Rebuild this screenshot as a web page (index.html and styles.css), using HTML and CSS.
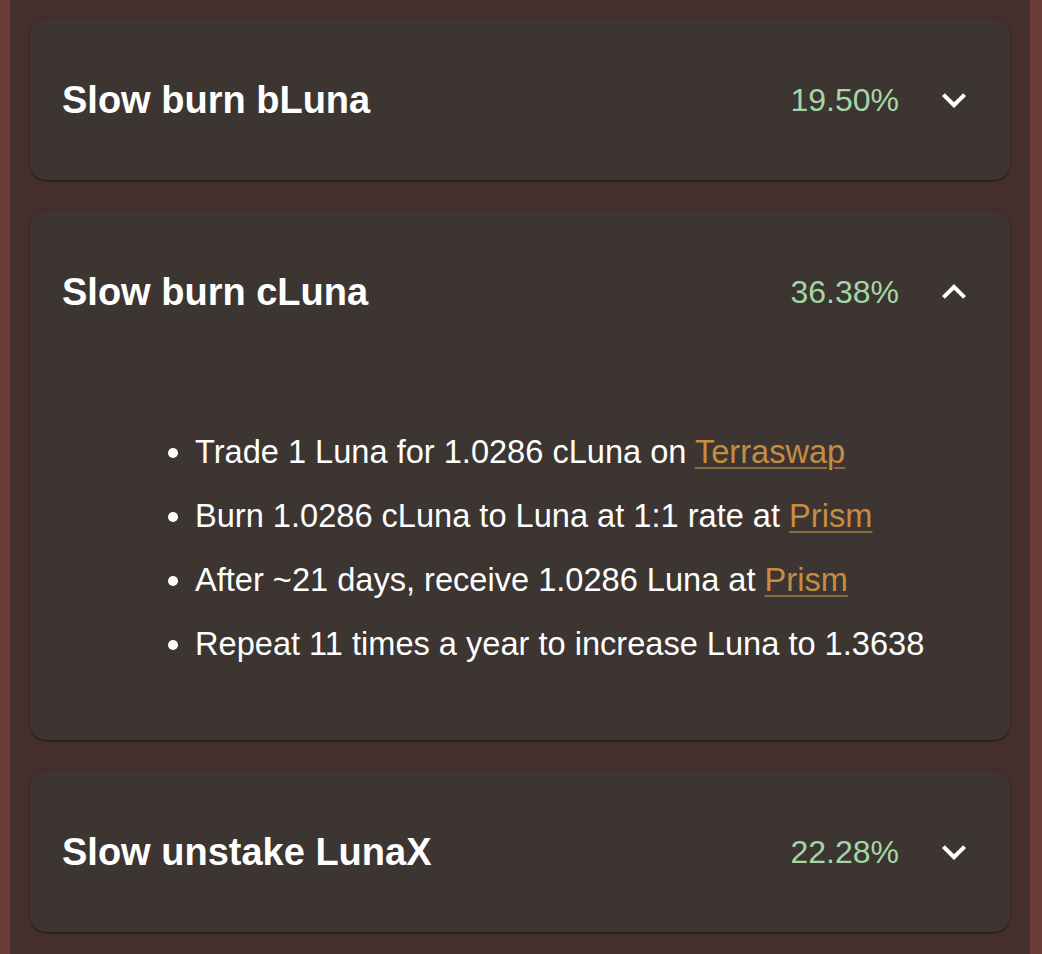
FILE: index.html
```html
<!DOCTYPE html>
<html lang="en">
<head>
<meta charset="utf-8">
<title>Luna yields</title>
<link rel="stylesheet" href="styles.css">
</head>
<body>
<main class="page">
  <section class="card">
    <div class="card-head">
      <h2 class="title">Slow burn bLuna</h2>
      <span class="rate">19.50%</span>
      <svg class="chev" viewBox="0 0 24 24" width="48" height="48"><path d="M16.59 8.59 12 13.17 7.41 8.59 6 10l6 6 6-6z" fill="#fff"/></svg>
    </div>
  </section>

  <section class="card">
    <div class="card-head">
      <h2 class="title">Slow burn cLuna</h2>
      <span class="rate">36.38%</span>
      <svg class="chev" viewBox="0 0 24 24" width="48" height="48"><path d="M12 8l-6 6 1.41 1.41L12 10.83l4.59 4.58L18 14z" fill="#fff"/></svg>
    </div>
    <div class="card-body">
      <ul class="steps">
        <li>Trade 1 Luna for 1.0286 cLuna on <a href="#">Terraswap</a></li>
        <li>Burn 1.0286 cLuna to Luna at 1:1 rate at <a href="#">Prism</a></li>
        <li>After ~21 days, receive 1.0286 Luna at <a href="#">Prism</a></li>
        <li>Repeat 11 times a year to increase Luna to 1.3638</li>
      </ul>
    </div>
  </section>

  <section class="card">
    <div class="card-head">
      <h2 class="title">Slow unstake LunaX</h2>
      <span class="rate">22.28%</span>
      <svg class="chev" viewBox="0 0 24 24" width="48" height="48"><path d="M16.59 8.59 12 13.17 7.41 8.59 6 10l6 6 6-6z" fill="#fff"/></svg>
    </div>
  </section>
</main>
</body>
</html>
```

FILE: styles.css
```css
html, body {
  margin: 0;
  padding: 0;
}
body {
  background: #6c3d37;
  font-family: "Liberation Sans", Arial, Helvetica, sans-serif;
  color: #fff;
  min-height: 954px;
}
.page {
  margin: 0 12px 0 10px;
  background: #46302d;
  min-height: 954px;
  padding: 20px 20px;
  box-sizing: border-box;
  display: flex;
  flex-direction: column;
  gap: 32px;
}
.card {
  background: #3c3531;
  border-radius: 16px;
  box-shadow: 0 2px 2px -1px rgba(0,0,0,0.35), 0 1px 2px rgba(0,0,0,0.25), 0 1px 6px rgba(0,0,0,0.15);
}
.card-head {
  height: 160px;
  display: flex;
  align-items: center;
  padding: 0 32px;
}
.title {
  flex: 1;
  margin: 0;
  font-size: 38px;
  font-weight: bold;
  color: #fff;
}
.rate {
  font-size: 32px;
  color: #a5d6a7;
  margin-right: 31px;
}
.chev {
  display: block;
  flex: none;
}
.card-body {
  padding: 16px 32px 32px;
}
.steps {
  margin: 32px 0;
  padding-left: 133px;
  font-size: 32.6px;
  line-height: 64px;
}
.steps a {
  color: #c58c42;
  text-decoration: underline;
  text-decoration-color: rgba(197,140,66,0.6);
  text-decoration-thickness: 2px;
  text-underline-offset: 4px;
}
```
